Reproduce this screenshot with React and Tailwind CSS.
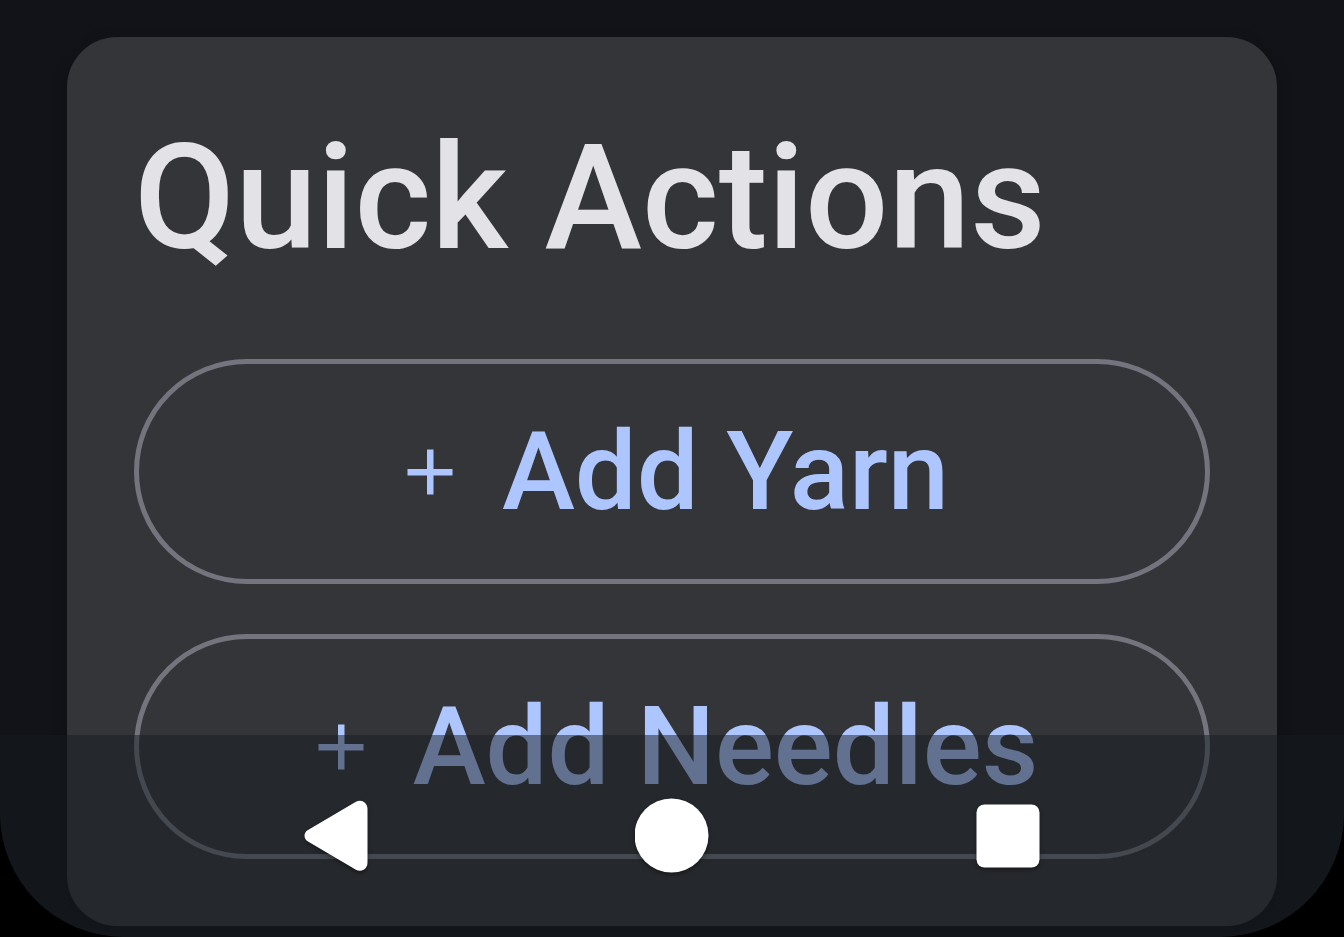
import React from 'react';

const actions = ['Add Yarn', 'Add Needles'];

function PlusIcon() {
  return (
    <svg viewBox="0 0 46 46" className="w-[46px] h-[46px] shrink-0" fill="currentColor" aria-hidden="true">
      <path d="M20 .5h6.500v19.500h19v6.500h-19v19H20v-19H.5V20H20z" />
    </svg>
  );
}

function ActionButton({ label }) {
  return (
    <button
      type="button"
      className="flex h-[225px] w-full items-center justify-center gap-[49px] rounded-full border-5 border-[#73747e] pl-3 text-[110px] leading-none font-medium text-[#adc6ff]"
    >
      <PlusIcon />
      {label}
    </button>
  );
}

function NavBar() {
  return (
    <nav className="absolute inset-x-0 bottom-0 flex h-[202px] justify-center gap-[262px] bg-[#161b20]/50 pt-[63px]">
      <button type="button" aria-label="Back" className="h-[76px] w-[74px]">
        <svg viewBox="0 0 74 76" className="h-full w-full drop-shadow-[0_2px_2px_rgba(0,0,0,0.4)]" fill="#fff">
          <path d="M9 32L56.500 4Q61 1.500 65 4Q68.500 6.500 68.500 11V64.500Q68.500 69 65 71.500Q61 74 56.500 71.500L9 43.500Q5.500 41.500 5.500 37.700Q5.500 34 9 32Z" />
        </svg>
      </button>
      <button type="button" aria-label="Home" className="h-[76px] w-[74px]">
        <svg viewBox="0 0 74 76" className="h-full w-full drop-shadow-[0_2px_2px_rgba(0,0,0,0.4)]" fill="#fff">
          <circle cx="36.500" cy="37.500" r="37" />
        </svg>
      </button>
      <button type="button" aria-label="Recent apps" className="h-[76px] w-[74px]">
        <svg viewBox="0 0 74 76" className="h-full w-full drop-shadow-[0_2px_2px_rgba(0,0,0,0.4)]" fill="#fff">
          <rect x="5.500" y="6.500" width="63" height="63" rx="8" />
        </svg>
      </button>
    </nav>
  );
}

export default function App() {
  return (
    <div className="bg-black font-[Roboto,sans-serif]">
      <main className="relative min-h-screen overflow-hidden rounded-b-[124px] bg-[#111318] px-[67px] pt-[37px] pb-[11px]">
        <section className="rounded-[50px] bg-[#343538] p-[67px] shadow-[0_4px_16px_rgba(0,0,0,0.2)]">
          <h1 className="mb-[67px] text-[147px] leading-[188px] font-medium text-[#e3e2e6]">Quick Actions</h1>
          <div className="flex flex-col gap-[50px]">
            {actions.map((label) => (
              <ActionButton key={label} label={label} />
            ))}
          </div>
        </section>
        <NavBar />
      </main>
    </div>
  );
}
